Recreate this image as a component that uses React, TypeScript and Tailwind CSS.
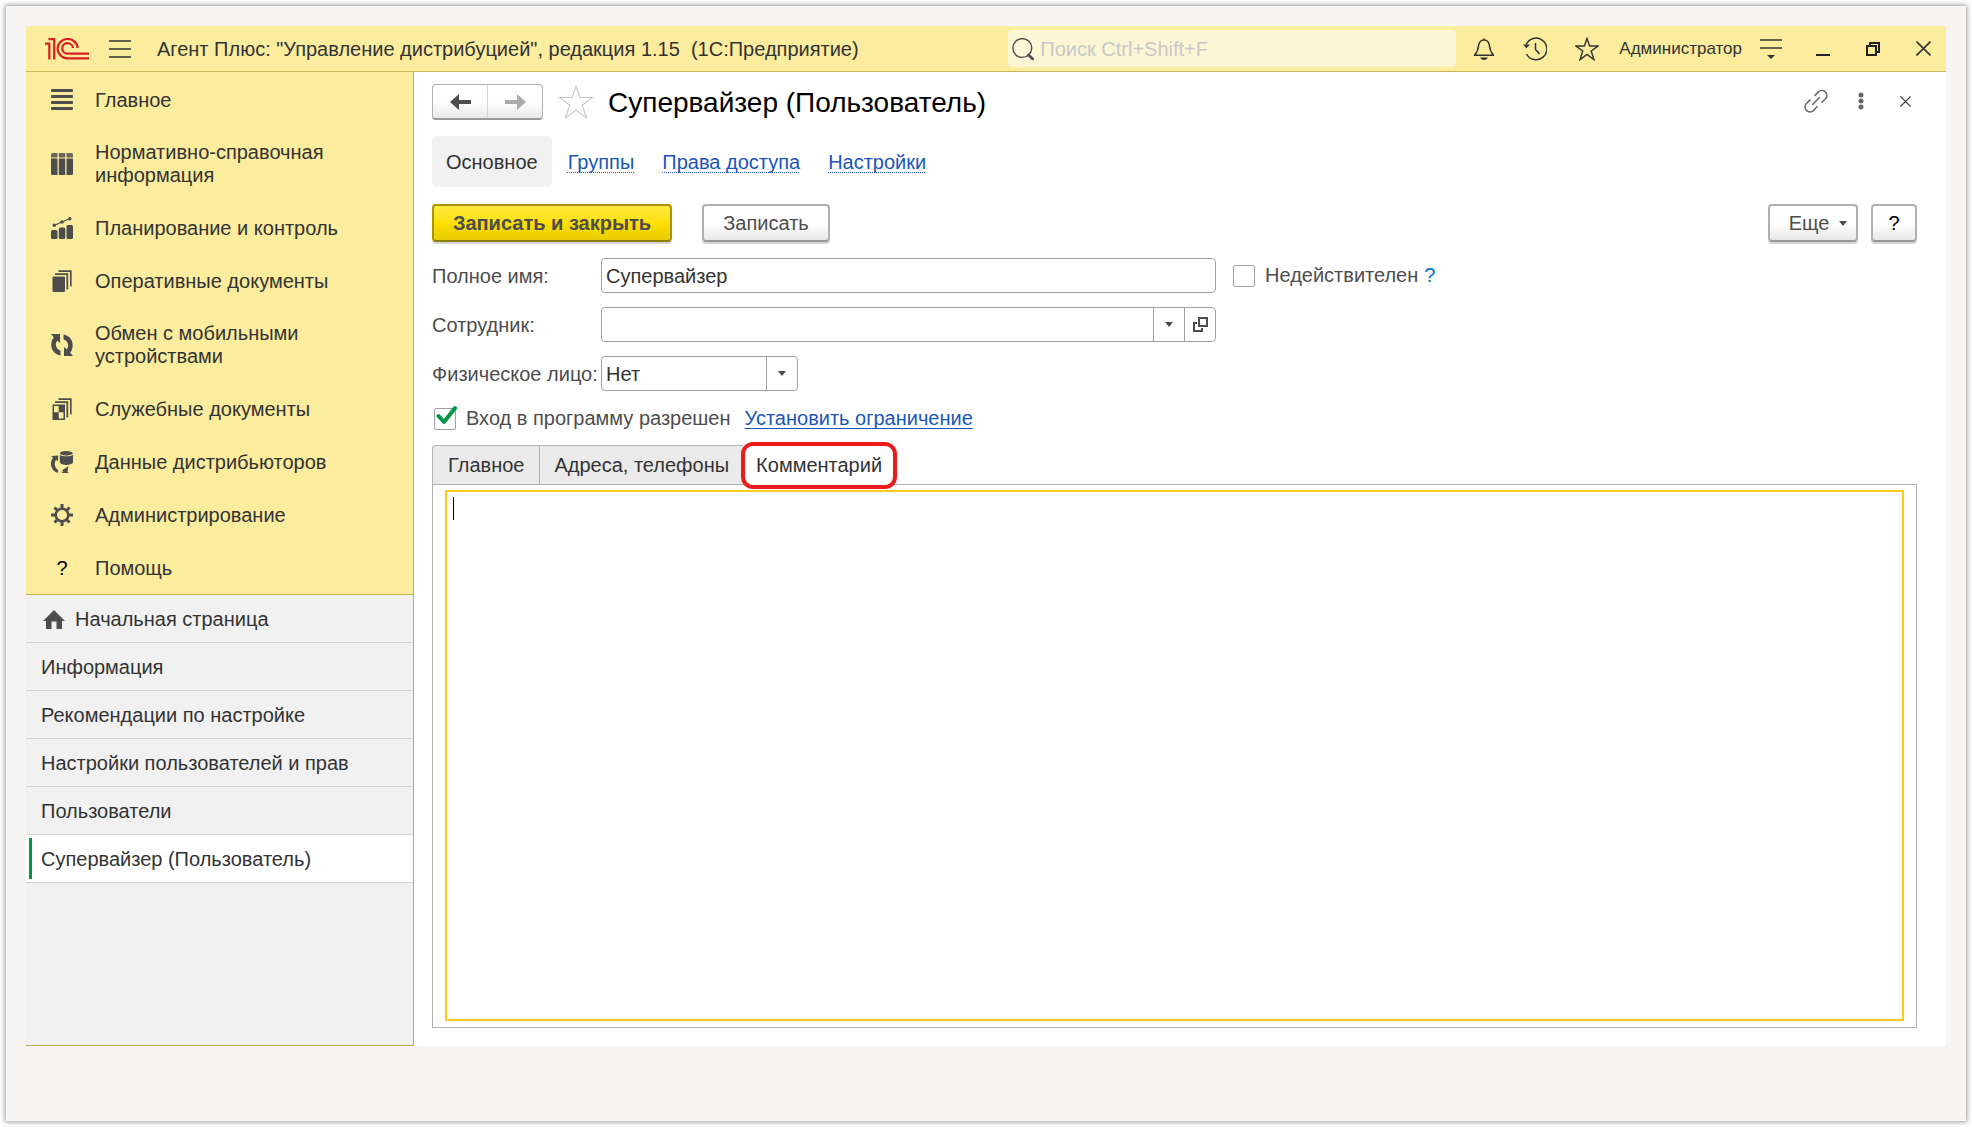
import React, { useState } from "react";

type IconProps = { className?: string };

const Logo = () => (
  <svg viewBox="0 0 44 22" className="h-[22px] w-11 shrink-0" fill="none" stroke="#da1f1f" strokeWidth="2.200" role="img" aria-label="1С">
    <path d="M0 5.700H4.300V21.500" />
    <path d="M3.400 1.200H9.200V21.500" />
    <path d="M32.600 10A10 9.700 0 1 0 22.600 20.400H44" />
    <path d="M28 10A5.400 5.200 0 1 0 22.600 15.600H44" />
  </svg>
);

const MenuLines = () => (
  <svg viewBox="0 0 22 18" className="h-[18px] w-[22px]" stroke="#333" strokeWidth="1.500">
    <path d="M0 1H22M0 9H22M0 17H22" />
  </svg>
);

const ListIcon = ({ className }: IconProps) => (
  <svg viewBox="0 0 22 22" className={className} fill="#4d4d4d">
    <rect y="0" width="22" height="3" rx="1" />
    <rect y="6" width="22" height="3" rx="1" />
    <rect y="12" width="22" height="3" rx="1" />
    <rect y="18" width="22" height="3" rx="1" />
  </svg>
);

const TableIcon = ({ className }: IconProps) => (
  <svg viewBox="0 0 22 22" className={className} fill="#4d4d4d">
    <path d="M0 1.500Q0 0 1.500 0H6.500V4.500H0ZM7.800 0H14.200V4.500H7.800ZM15.500 0H20.500Q22 0 22 1.500V4.500H15.500Z" opacity=".85" />
    <path d="M0 5.500H6.500V22H1.500Q0 22 0 20.500ZM7.800 5.500H14.200V22H7.800ZM15.500 5.500H22V20.500Q22 22 20.500 22H15.500Z" />
  </svg>
);

const ChartIcon = ({ className }: IconProps) => (
  <svg viewBox="0 0 22 22" className={className} fill="#4d4d4d">
    <rect x="0" y="13" width="6.500" height="9" rx="1.500" />
    <rect x="7.800" y="10.500" width="6.500" height="11.500" rx="1.500" />
    <rect x="15.500" y="8" width="6.500" height="14" rx="1.500" />
    <path d="M3 8.500L11 5L19 1.500" stroke="#4d4d4d" strokeWidth="1.300" fill="none" />
    <circle cx="3.300" cy="8.300" r="1.700" />
    <circle cx="11" cy="5" r="1.700" />
    <circle cx="18.800" cy="1.700" r="1.700" />
  </svg>
);

const DocsIcon = ({ className }: IconProps) => (
  <svg viewBox="0 0 22 22" className={className} fill="#4d4d4d">
    <rect x="1.500" y="6.500" width="12.500" height="15.500" rx="1" />
    <path d="M4 4.200H16.300V19.500M7.500 1.200H19.800V16.200" fill="none" stroke="#4d4d4d" strokeWidth="1.700" />
  </svg>
);

const ServiceDocsIcon = ({ className }: IconProps) => (
  <svg viewBox="0 0 22 22" className={className} fill="#4d4d4d">
    <path fillRule="evenodd" d="M1.500 6.500H14V22H1.500ZM3 8V14.200H7.700V8ZM7.700 14.200V20.500H12.500V14.200Z" />
    <path d="M4 4.200H16.300V19.500M7.500 1.200H19.800V16.200" fill="none" stroke="#4d4d4d" strokeWidth="1.700" />
  </svg>
);

const ExchangeIcon = ({ className }: IconProps) => (
  <svg viewBox="0 0 22 22" className={className} fill="#4d4d4d">
    <path d="M0 0H9V9L6.300 6.700C3.800 9.500 4.200 14.500 9.500 16.800V21.500C0 20-2 9.500 2.800 3.300Z" />
    <path d="M22 22H13V13L15.700 15.300C18.200 12.500 17.800 7.500 12.500 5.200V.5C22 2 24 12.500 19.200 18.700Z" />
  </svg>
);

const DataIcon = ({ className }: IconProps) => (
  <svg viewBox="0 0 22 22" className={className} fill="#4d4d4d">
    <ellipse cx="15.300" cy="2.300" rx="6.500" ry="2.200" />
    <path d="M8.800 3.900C11 5.800 19.500 5.800 22 3.900V11.500C20.500 14.700 10 14.700 8.800 11.500Z" />
    <path d="M0 5L7.200 4.500L7 10.500L5 8.800C2.800 12 3.500 17 7.300 19.200L6.500 22C-.8 19-1.500 11.500 2 6.800Z" />
    <path d="M17.500 15L16.500 20L17.500 22H10.500L12.200 20.300L11 19.500Z" />
  </svg>
);

const GearIcon = ({ className }: IconProps) => (
  <svg viewBox="0 0 22 22" className={className} fill="none" stroke="#4d4d4d">
    <circle cx="11" cy="11" r="6.300" strokeWidth="2.600" />
    <path d="M11 0V4M11 18V22M0 11H4M18 11H22M3.500 3.500L6 6M16 16L18.500 18.500M3.500 18.500L6 16M16 6L18.500 3.500" strokeWidth="3" />
  </svg>
);

const HelpMark = ({ className }: IconProps) => (
  <span className={`${className} flex items-center justify-center text-black`}>?</span>
);

const HomeIcon = () => (
  <svg viewBox="0 0 22 19" className="h-[19px] w-[22px]" fill="#4d4d4d">
    <path d="M11 0L22 11H19V19H13.500V11.500H8.500V19H3V11H0Z" />
  </svg>
);

const SearchIcon = () => (
  <svg viewBox="0 0 22 22" className="h-[22px] w-[22px] shrink-0" fill="none" stroke="#4d4d4d">
    <circle cx="10.300" cy="10" r="9.400" strokeWidth="1.400" />
    <path d="M16.500 17L20.800 21" strokeWidth="2.600" strokeLinecap="round" />
  </svg>
);

const BellIcon = () => (
  <svg viewBox="0 0 22 24" className="h-6 w-[22px]" fill="none" stroke="#333" strokeWidth="1.500" strokeLinejoin="round">
    <path d="M1.500 18.300C3.500 16 5 14 5.500 9C6 5 8 3 11 3S16 5 16.500 9C17 14 18.500 16 20.500 18.300Z" />
    <path d="M9.500 2.500A1.600 1.600 0 0 1 12.500 2.500ZM7 20.500H15Q13.500 23 11 23T7 20.500Z" fill="#333" stroke="none" />
  </svg>
);

const HistoryIcon = () => (
  <svg viewBox="0 0 24 24" className="h-6 w-6" fill="none" stroke="#333" strokeWidth="1.500">
    <path d="M3.200 7.500A10.800 10.800 0 1 1 3.500 17" />
    <path d="M12.500 6V12.500L16.500 17" />
    <path d="M0 7.500H7L3.400 11.200Z" fill="#333" stroke="none" />
  </svg>
);

const StarIcon = ({ className }: IconProps) => (
  <svg viewBox="0 0 34 34" className={className} fill="none" strokeLinejoin="miter">
    <path d="M17 2L20.700 12.800H32.500L23 19.800L26.800 32L17 24.600L7.200 32L11 19.800L1.500 12.800H13.300Z" />
  </svg>
);

const OptionsIcon = () => (
  <svg viewBox="0 0 22 20" className="h-5 w-[22px]" stroke="#333" strokeWidth="1.600">
    <path d="M0 1H22M0 9H22" />
    <path d="M7 16H15L11 20Z" fill="#333" stroke="none" />
  </svg>
);

const RestoreIcon = () => (
  <svg viewBox="0 0 14 14" className="h-3.5 w-3.5" fill="none" stroke="#222" strokeWidth="2">
    <path d="M1 4H10V13H1ZM4 4V1H13V10H10" />
  </svg>
);

const CrossIcon = ({ className }: IconProps) => (
  <svg viewBox="0 0 14 14" className={className} fill="none" stroke="#333" strokeWidth="1.500">
    <path d="M.5.5L13.500 13.500M13.500.5L.5 13.500" />
  </svg>
);

const LinkIcon = () => (
  <svg viewBox="0 0 24 24" className="h-6 w-6" fill="none" stroke="#666" strokeWidth="1.600">
    <path d="M10.500 7L14.500 2.800A5 5 0 0 1 21.500 3A5 5 0 0 1 21.500 9.800L17.500 13.500" />
    <path d="M6.500 10.500L2.500 14.500A5 5 0 0 0 2.500 21.500A5 5 0 0 0 9.500 21.500L13.500 17.300" />
    <path d="M8.300 15.700L15.700 8.300" />
  </svg>
);

const DotsIcon = () => (
  <svg viewBox="0 0 6 18" className="h-[18px] w-1.5" fill="#666">
    <circle cx="3" cy="3" r="2.500" />
    <circle cx="3" cy="9" r="2.500" />
    <circle cx="3" cy="15" r="2.500" />
  </svg>
);

const ArrowIcon = ({ className }: IconProps) => (
  <svg viewBox="0 0 21 16" className={className} fill="currentColor">
    <path d="M0 8L9 0V6H21V10H9V16Z" />
  </svg>
);

const Caret = () => (
  <svg viewBox="0 0 8 5" className="h-[5px] w-2" fill="#4d4d4d">
    <path d="M0 0H8L4 5Z" />
  </svg>
);

const OpenIcon = () => (
  <svg viewBox="0 0 15 15" className="h-[15px] w-[15px]" fill="none" stroke="#4d4d4d" strokeWidth="2">
    <path d="M6 1H14V9H6ZM4 6H1V14H9V11" />
  </svg>
);

const sections = [
  { label: "Главное", Icon: ListIcon },
  { label: "Нормативно-справочная информация", Icon: TableIcon },
  { label: "Планирование и контроль", Icon: ChartIcon },
  { label: "Оперативные документы", Icon: DocsIcon },
  { label: "Обмен с мобильными устройствами", Icon: ExchangeIcon },
  { label: "Служебные документы", Icon: ServiceDocsIcon },
  { label: "Данные дистрибьюторов", Icon: DataIcon },
  { label: "Администрирование", Icon: GearIcon },
  { label: "Помощь", Icon: HelpMark },
];

const openPages = ["Информация", "Рекомендации по настройке", "Настройки пользователей и прав", "Пользователи"];

const greyButton =
  "flex h-[38px] items-center justify-center rounded border-2 border-[#b0b0b0] border-b-[#999] bg-linear-to-b from-white from-50% to-[#e8e8e8] shadow-[0_2px_0_#d4d4d4] text-[#4d4d4d]";

function TitleBar() {
  return (
    <header className="flex h-[46px] items-center border-b border-[#c9b95c] bg-[#fbec9e] pr-[15px] pl-[19px]">
      <Logo />
      <button aria-label="Меню" className="ml-5">
        <MenuLines />
      </button>
      <h1 className="ml-[26px] flex-1 pt-0.5 whitespace-pre">Агент Плюс: "Управление дистрибуцией", редакция 1.15  (1С:Предприятие)</h1>
      <label className="flex h-[37px] w-[448px] items-center gap-1.5 rounded-sm bg-[#fdf6d5] pl-1">
        <SearchIcon />
        <input type="search" aria-label="Поиск" placeholder="Поиск Ctrl+Shift+F" className="min-w-0 flex-1 bg-transparent pt-0.5 outline-none placeholder:text-[#c8c8c8]" />
      </label>
      <div className="ml-[17px] flex items-center gap-7">
        <button aria-label="Уведомления"><BellIcon /></button>
        <button aria-label="История"><HistoryIcon /></button>
        <button aria-label="Избранное"><StarIcon className="h-6 w-6 stroke-[#333] stroke-2" /></button>
      </div>
      <button className="ml-5 text-[17px] leading-5">Администратор</button>
      <button aria-label="Настройки" className="ml-[18px]"><OptionsIcon /></button>
      <div className="ml-[34px] flex items-center gap-9">
        <button aria-label="Свернуть" className="flex h-3.5 w-3.5 items-end">
          <span className="h-0.5 w-full bg-[#222]" />
        </button>
        <button aria-label="Восстановить"><RestoreIcon /></button>
        <button aria-label="Закрыть"><CrossIcon className="h-[15px] w-[15px]" /></button>
      </div>
    </header>
  );
}

function Sidebar() {
  return (
    <aside className="flex w-[388px] shrink-0 flex-col border-r border-b border-[#b9ad58] bg-[#f1f1f1]">
      <nav className="border-b border-[#c4b04e] bg-[#fbec9e] pt-px">
        {sections.map(({ label, Icon }) => (
          <a key={label} href="#" className="flex min-h-[53px] items-center gap-[22px] pt-[15px] pr-16 pb-3.5 pl-[25px]">
            <Icon className="h-[22px] w-[22px] shrink-0" />
            <span>{label}</span>
          </a>
        ))}
      </nav>
      <nav>
        <a href="#" className="flex h-12 items-center gap-2.5 border-b border-[#d4d4d4] pt-0.5 pl-[17px]">
          <HomeIcon />
          Начальная страница
        </a>
        {openPages.map((p) => (
          <a key={p} href="#" className="flex h-12 items-center border-b border-[#d4d4d4] pt-0.5 pl-[15px]">
            {p}
          </a>
        ))}
        <a href="#" aria-current="page" className="flex h-12 items-center gap-[9px] border-b border-[#d4d4d4] bg-white pl-[3px]">
          <span className="h-[41px] w-[3px] bg-[#009646]" />
          <span className="pt-0.5">Супервайзер (Пользователь)</span>
        </a>
      </nav>
    </aside>
  );
}

function CheckBox({ label, checked, onChange }: { label: string; checked: boolean; onChange: (v: boolean) => void }) {
  return (
    <label className="flex items-center gap-2.5 text-[#4d4d4d]">
      <span className="relative flex">
        <input
          type="checkbox"
          checked={checked}
          onChange={(e) => onChange(e.target.checked)}
          className="h-[22px] w-[22px] appearance-none rounded-xs border border-[#a0a0a0] bg-white"
        />
        {checked && (
          <svg viewBox="0 0 22 24" className="pointer-events-none absolute -top-1 left-0.5 h-6 w-[22px]" fill="none" stroke="#009646" strokeWidth="4">
            <path d="M2.500 12L8 18L19 4" strokeLinecap="round" strokeLinejoin="round" />
          </svg>
        )}
      </span>
      {label}
    </label>
  );
}

const field = "h-[35px] rounded border border-[#a0a0a0] bg-white";
const subLink = "pt-0.5 text-[#1a56b8] underline decoration-dotted decoration-1 underline-offset-[3px] [text-decoration-skip-ink:none]";

function UserForm() {
  const [inactive, setInactive] = useState(false);
  const [allowed, setAllowed] = useState(true);
  return (
    <main className="flex min-w-0 flex-1 flex-col bg-white pt-3 pr-[29px] pb-[18px] pl-[18px]">
      <div className="flex h-9 items-center">
        <div className="flex h-9 w-[111px] rounded border border-b-2 border-[#b0b0b0] border-b-[#999] bg-linear-to-b from-white from-50% to-[#e8e8e8]">
          <button aria-label="Назад" className="flex flex-1 items-center justify-center border-r border-[#d4d4d4] text-[#4d4d4d]">
            <ArrowIcon className="h-4 w-[21px]" />
          </button>
          <button aria-label="Вперед" className="flex flex-1 items-center justify-center text-[#ababab]">
            <ArrowIcon className="h-4 w-[21px] rotate-180" />
          </button>
        </div>
        <button aria-label="В избранное" className="ml-[15px]">
          <StarIcon className="h-9 w-9 stroke-[#c0c6cc]" />
        </button>
        <h2 className="ml-3.5 flex-1 pt-0.5 text-[28px] leading-9 text-black">Супервайзер (Пользователь)</h2>
        <div className="flex items-center pr-1.5 pb-0.5">
          <button aria-label="Получить ссылку"><LinkIcon /></button>
          <button aria-label="Ещё действия" className="ml-[30px]"><DotsIcon /></button>
          <button aria-label="Закрыть форму" className="ml-9"><CrossIcon className="h-[11px] w-[11px]" /></button>
        </div>
      </div>

      <nav className="mt-4 flex h-[51px] items-center gap-7">
        <a href="#" aria-current="page" className="-mr-3 flex h-full items-center rounded-md bg-[#f1f1f1] px-3.5 pt-0.5">Основное</a>
        <a href="#" className={subLink}>Группы</a>
        <a href="#" className={subLink}>Права доступа</a>
        <a href="#" className={subLink}>Настройки</a>
      </nav>

      <div className="mt-[17px] flex">
        <button className="flex h-[38px] w-[240px] items-center justify-center rounded border-2 border-[#a89400] border-b-[#8f7f00] bg-linear-to-b from-[#ffe83c] via-[#fde000] to-[#e8cc00] font-bold text-[#4d4d4d] shadow-[0_2px_0_#d4d4d4]">
          Записать и закрыть
        </button>
        <button className={`${greyButton} ml-[30px] w-32`}>Записать</button>
        <button className={`${greyButton} ml-auto w-[90px] gap-2.5 pl-2.5`}>
          Еще <Caret />
        </button>
        <button aria-label="Справка" className={`${greyButton} ml-[13px] w-[46px] text-black`}>?</button>
      </div>

      <div className="mt-4 grid grid-cols-[169px_615px_auto] items-center gap-y-3.5">
        <label htmlFor="fullname" className="pt-0.5 text-[#4d4d4d]">Полное имя:</label>
        <input id="fullname" defaultValue="Супервайзер" className={`${field} px-1 pt-0.5 outline-none`} />
        <div className="ml-[17px] flex items-center gap-1.5">
          <CheckBox label="Недействителен" checked={inactive} onChange={setInactive} />
          <button aria-label="Подсказка" className="text-[#0070c0]">?</button>
        </div>

        <label htmlFor="employee" className="pt-0.5 text-[#4d4d4d]">Сотрудник:</label>
        <div className={`${field} flex`}>
          <input id="employee" className="min-w-0 flex-1 px-1 outline-none" />
          <button aria-label="Выбрать" className="flex w-[31px] items-center justify-center border-l border-[#a0a0a0]"><Caret /></button>
          <button aria-label="Открыть" className="flex w-[31px] items-center justify-center border-l border-[#a0a0a0]"><OpenIcon /></button>
        </div>
        <span />

        <label htmlFor="person" className="pt-0.5 whitespace-nowrap text-[#4d4d4d]">Физическое лицо:</label>
        <div className={`${field} relative w-[197px]`}>
          <select id="person" className="h-full w-full appearance-none px-1 pt-0.5 outline-none">
            <option>Нет</option>
            <option>Да</option>
          </select>
          <span className="pointer-events-none absolute inset-y-0 right-0 flex w-[31px] items-center justify-center border-l border-[#a0a0a0]"><Caret /></span>
        </div>
      </div>

      <div className="mt-4 ml-0.5 flex items-center gap-3.5">
        <CheckBox label="Вход в программу разрешен" checked={allowed} onChange={setAllowed} />
        <a href="#" className="text-[#1a56b8] underline decoration-1 underline-offset-[3px] [text-decoration-skip-ink:none]">Установить ограничение</a>
      </div>

      <div role="tablist" className="mt-[15px] flex h-[39px]">
        <button role="tab" className="rounded-tl border-t border-l border-[#b0b0b0] bg-[#eaeaea] px-[15px]">Главное</button>
        <button role="tab" className="border-t border-l border-[#b0b0b0] bg-[#eaeaea] px-3.5">Адреса, телефоны</button>
        <button role="tab" aria-selected="true" className="relative z-10 -mt-[3px] -mb-[5px] -ml-0.5 rounded-xl border-4 border-[#ed1c1c] bg-white px-[11px]">Комментарий</button>
      </div>
      <div className="relative flex flex-1 border border-[#b0b0b0] pt-[5px] pr-3 pb-1.5 pl-3">
        <textarea aria-label="Комментарий" className="flex-1 resize-none border-2 border-[#fccb1c] px-1.5 py-1 caret-transparent outline-none" />
        <span className="absolute top-3 left-5 h-[23px] w-px bg-black" />
      </div>
    </main>
  );
}

export default function App() {
  return (
    <div className="flex min-h-screen flex-col bg-white p-1.5 font-['Liberation_Sans',Arial,sans-serif] text-[20px] leading-[23px] text-[#333]">
      <div className="flex flex-1 flex-col bg-[#f6f5f3] px-5 pt-5 pb-[75px] shadow-[0_0_5px_1px_rgba(0,0,0,0.4)]">
        <TitleBar />
        <div className="flex flex-1">
          <Sidebar />
          <UserForm />
        </div>
      </div>
    </div>
  );
}
